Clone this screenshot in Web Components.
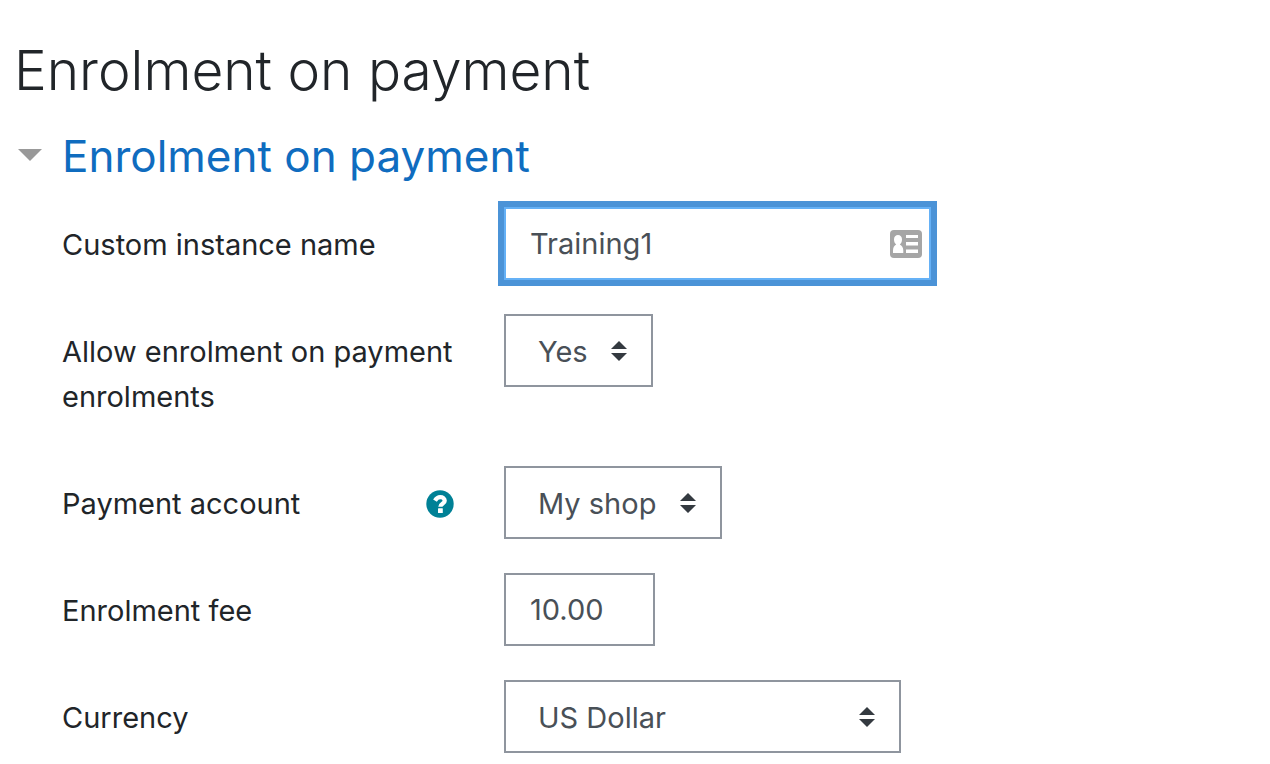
<!DOCTYPE html>
<html lang="en">
<head>
<meta charset="utf-8">
<meta name="viewport" content="width=device-width, initial-scale=1">
<title>Enrolment on payment</title>
<style>
  body { margin: 0; background: #fff; color: #212529; font: 400 29px/45px Inter, "Liberation Sans", sans-serif; }
</style>
</head>
<body>
<enrol-page heading="Enrolment on payment">
  <form-section heading="Enrolment on payment">
    <text-field label="Custom instance name" name="name" value="Training1" style="--field-width: 427px" active contact></text-field>
    <select-field label="Allow enrolment on payment enrolments" name="status" options="Yes|No" style="--field-width: 149px"></select-field>
    <select-field label="Payment account" name="account" options="My shop" style="--field-width: 218px" help></select-field>
    <text-field label="Enrolment fee" name="cost" value="10.00" style="--field-width: 151px"></text-field>
    <select-field label="Currency" name="currency" options="US Dollar|Euro" style="--field-width: 397px"></select-field>
  </form-section>
</enrol-page>

<template id="page">
  <style>
    :host { display: block; padding: 34px 14px 11px; }
    h1 { margin: 0 0 14px; font-size: 55px; line-height: 72px; font-weight: 300; }
  </style>
  <main><h1></h1><slot></slot></main>
</template>

<template id="section">
  <style>
    :host { display: block; }
    h2 { margin: 0 0 15px; font-size: 44px; line-height: 72px; font-weight: 400; }
    button { display: flex; align-items: center; gap: 20px; margin: 0; padding: 0 0 0 4px; border: 0; background: none; color: #0f6cbf; font: inherit; cursor: pointer; }
    svg { display: block; width: 24px; height: 12px; margin-bottom: 2px; }
    form { display: grid; gap: 34px; padding-left: 48px; }
  </style>
  <h2><button type="button" aria-expanded="true"><svg viewBox="0 0 24 12" aria-hidden="true"><path d="M0 0h24L12 12z" fill="#999"/></svg><span></span></button></h2>
  <form><slot></slot></form>
</template>

<template id="row">
  <style>
    :host { display: grid; grid-template-columns: 392px minmax(0, 1fr); column-gap: 50px; align-items: start; }
    .caption { display: flex; justify-content: space-between; padding: 15px 0 13px; }
    .help { display: flex; align-items: center; height: 45px; padding: 0; border: 0; background: none; cursor: pointer; }
    .help svg { display: block; width: 28px; height: 28px; }
    .control { display: grid; align-items: center; width: var(--field-width); max-width: 100%; }
    .control > * { grid-area: 1 / 1; }
    input, select { box-sizing: border-box; width: 100%; height: 73px; margin: 0; border: 2px solid #8f959e; border-radius: 0; background: #fff; color: #495057; font: inherit; appearance: none; outline: 0; }
    input { padding: 0 24px; }
    select { padding: 2px 48px 0 32px; }
    :host([active]) input { border-color: #65b1f6; box-shadow: 0 0 0 6px #4b93d7; }
    .mark { justify-self: end; pointer-events: none; }
    .arrows { width: 16px; height: 20px; margin-right: 26px; }
    .card { width: 32px; height: 28px; margin-right: 9px; }
  </style>
  <div class="caption"><label for="control"></label></div>
  <div class="control"></div>
</template>

<template id="help-icon">
  <button class="help" type="button" aria-label="Help with Payment account"><svg viewBox="0 0 28 28" aria-hidden="true"><circle cx="14" cy="14" r="13.7" fill="#008196"/><path d="M9 10.600C10.400 8.200 11.900 7.100 14.200 7.100c2.600 0 4.500 1.400 4.500 3.600 0 3.200-4.300 3-4.300 6.100" fill="none" stroke="#fff" stroke-width="4.300"/><rect x="12" y="18.300" width="4.800" height="4.600" rx=".5" fill="#fff"/></svg></button>
</template>
<template id="arrows-icon">
  <svg class="mark arrows" viewBox="0 0 16 20" aria-hidden="true"><path d="M8 0l8 8H0zM0 12h16l-8 8z" fill="#343a40"/></svg>
</template>
<template id="card-icon">
  <svg class="mark card" viewBox="0 0 32 28" aria-hidden="true"><rect width="32" height="28" rx="4" fill="#a6a6a6"/><path d="M3 23v-2.500c0-3 1.200-5.100 3.200-6.100C4.800 13.400 4 11.700 4 9.500 4 6.700 5.700 5 8 5s4 1.700 4 4.500c0 2.200-.8 3.900-2.200 4.900 2 1 3.500 3.100 3.500 6.100V23zM16 5h12v3H16zM16 12h12v3.500H16zM16 19.500h12V23H16z" fill="#fff"/></svg>
</template>

<script>
  const stamp = id => document.getElementById(id).content.cloneNode(true);

  class EnrolPage extends HTMLElement {
    connectedCallback() {
      const root = this.attachShadow({ mode: 'open' });
      root.append(stamp('page'));
      root.querySelector('h1').textContent = this.getAttribute('heading');
    }
  }

  class FormSection extends HTMLElement {
    connectedCallback() {
      const root = this.attachShadow({ mode: 'open' });
      root.append(stamp('section'));
      root.querySelector('span').textContent = this.getAttribute('heading');
      const button = root.querySelector('button');
      button.addEventListener('click', () => {
        const form = root.querySelector('form');
        const open = form.style.display === 'none';
        form.style.display = open ? '' : 'none';
        button.setAttribute('aria-expanded', open);
      });
    }
  }

  class FieldRow extends HTMLElement {
    connectedCallback() {
      const root = this.attachShadow({ mode: 'open' });
      root.append(stamp('row'));
      root.querySelector('label').textContent = this.getAttribute('label');
      if (this.hasAttribute('help')) root.querySelector('.caption').append(stamp('help-icon'));
      const control = this.createControl();
      control.id = 'control';
      control.name = this.getAttribute('name');
      root.querySelector('.control').append(control);
      const icon = this.iconName();
      if (icon) root.querySelector('.control').append(stamp(icon));
    }
  }

  class TextField extends FieldRow {
    createControl() {
      const input = document.createElement('input');
      input.type = 'text';
      input.value = this.getAttribute('value');
      return input;
    }
    iconName() { return this.hasAttribute('contact') ? 'card-icon' : ''; }
  }

  class SelectField extends FieldRow {
    createControl() {
      const select = document.createElement('select');
      for (const text of this.getAttribute('options').split('|')) select.add(new Option(text));
      return select;
    }
    iconName() { return 'arrows-icon'; }
  }

  customElements.define('enrol-page', EnrolPage);
  customElements.define('form-section', FormSection);
  customElements.define('text-field', TextField);
  customElements.define('select-field', SelectField);
</script>
</body>
</html>
